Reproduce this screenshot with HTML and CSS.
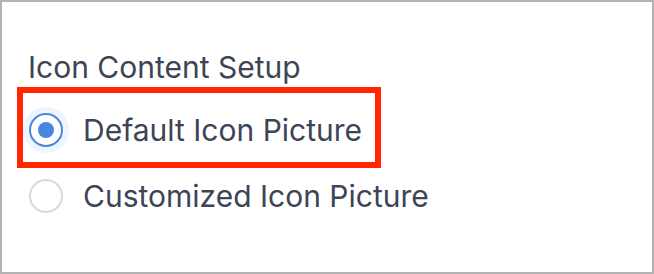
FILE: index.html
```html
<!DOCTYPE html>
<html>
<head>
<meta charset="utf-8">
<title>Icon Content Setup</title>
<link rel="stylesheet" href="styles.css">
</head>
<body>
<div class="panel">
    <div class="title">Icon Content Setup</div>
    <div class="options">
        <div class="highlight">
            <label class="option">
                <span class="radio checked"><span class="ring"><span class="dot"></span></span></span>
                <span class="label">Default Icon Picture</span>
            </label>
        </div>
        <label class="option plain">
            <span class="radio"><span class="ring"></span></span>
            <span class="label">Customized Icon Picture</span>
        </label>
    </div>
</div>
</body>
</html>
```

FILE: styles.css
```css
html,body{margin:0;padding:0;background:#fff;}
body{font-family:Inter,"Noto Sans",sans-serif;color:#3d4456;}
.panel{box-sizing:border-box;width:654px;height:274px;border:2px solid #b3b3b3;padding:48px 0 0 15px;}
.title{font-size:30px;line-height:34px;margin-left:11px;}
.options{margin-top:3px;}
.highlight{box-sizing:border-box;width:364px;border:6px solid #ff2600;padding:14px 0 9px 0;}
.option{display:flex;align-items:center;gap:14px;height:46px;}
.option.plain{margin-top:5px;padding-left:6px;}
.radio{width:46px;height:46px;border-radius:50%;display:flex;align-items:center;justify-content:center;}
.radio.checked{background:#edf5fe;}
.ring{box-sizing:border-box;width:34px;height:34px;border-radius:50%;border:2px solid #d9d9d9;background:#fff;display:flex;align-items:center;justify-content:center;}
.checked .ring{border-color:#4a86e0;}
.dot{width:16px;height:16px;border-radius:50%;background:#4a86e0;}
.label{font-size:30px;line-height:34px;}
```
